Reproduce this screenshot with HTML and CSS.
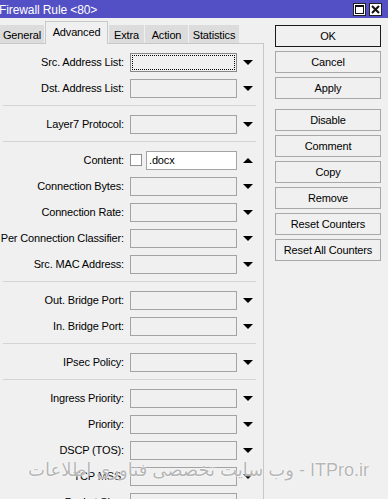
FILE: index.html
```html
<!DOCTYPE html>
<html>
<head>
<meta charset="utf-8">
<link rel="stylesheet" href="styles.css">
</head>
<body>
<div class="window">
  <div class="titlebar">
    <span class="title">Firewall Rule &lt;80&gt;</span>
    <div class="wbtns">
      <span class="wbtn"><svg width="11" height="11" viewBox="0 0 11 11"><rect x="1.5" y="1.5" width="8" height="8" fill="none" stroke="#111" stroke-width="1"/><rect x="1" y="1" width="9" height="2" fill="#111"/></svg></span>
      <span class="wbtn"><svg width="11" height="11" viewBox="0 0 11 11"><path d="M2 2 L9 9 M9 2 L2 9" stroke="#111" stroke-width="2" fill="none"/></svg></span>
    </div>
  </div>
  <div class="main">
    <div class="left">
      <div class="tabs">
        <div class="tab t-general">General</div>
        <div class="tab active t-adv">Advanced</div>
        <div class="tab t-extra">Extra</div>
        <div class="tab t-action">Action</div>
        <div class="tab t-stats">Statistics</div>
      </div>
      <div class="panel">
        <div class="row"><span class="label">Src. Address List:</span><span class="input focus"></span><span class="arrow down"></span></div>
        <div class="row"><span class="label">Dst. Address List:</span><span class="input"></span><span class="arrow down"></span></div>
        <div class="sep"></div>
        <div class="row"><span class="label">Layer7 Protocol:</span><span class="input"></span><span class="arrow down"></span></div>
        <div class="sep"></div>
        <div class="row"><span class="label">Content:</span><span class="check"></span><span class="input text">.docx</span><span class="arrow up"></span></div>
        <div class="row"><span class="label">Connection Bytes:</span><span class="input"></span><span class="arrow down"></span></div>
        <div class="row"><span class="label">Connection Rate:</span><span class="input"></span><span class="arrow down"></span></div>
        <div class="row"><span class="label">Per Connection Classifier:</span><span class="input"></span><span class="arrow down"></span></div>
        <div class="row"><span class="label">Src. MAC Address:</span><span class="input"></span><span class="arrow down"></span></div>
        <div class="sep"></div>
        <div class="row"><span class="label">Out. Bridge Port:</span><span class="input"></span><span class="arrow down"></span></div>
        <div class="row"><span class="label">In. Bridge Port:</span><span class="input"></span><span class="arrow down"></span></div>
        <div class="sep"></div>
        <div class="row"><span class="label">IPsec Policy:</span><span class="input"></span><span class="arrow down"></span></div>
        <div class="sep"></div>
        <div class="row"><span class="label">Ingress Priority:</span><span class="input"></span><span class="arrow down"></span></div>
        <div class="row"><span class="label">Priority:</span><span class="input"></span><span class="arrow down"></span></div>
        <div class="row"><span class="label">DSCP (TOS):</span><span class="input"></span><span class="arrow down"></span></div>
        <div class="row"><span class="label">TCP MSS:</span><span class="input"></span><span class="arrow down"></span></div>
        <div class="row"><span class="label">Packet Size:</span><span class="input"></span><span class="arrow down"></span></div>
      </div>
    </div>
    <div class="buttons">
      <div class="btn default">OK</div>
      <div class="btn">Cancel</div>
      <div class="btn">Apply</div>
      <div class="btn gap">Disable</div>
      <div class="btn">Comment</div>
      <div class="btn">Copy</div>
      <div class="btn">Remove</div>
      <div class="btn">Reset Counters</div>
      <div class="btn">Reset All Counters</div>
    </div>
  </div>
  <div class="watermark" dir="rtl">ITPro.ir - وب سایت تخصصی فناوری اطلاعات</div>
</div>
</body>
</html>
```
FILE: styles.css
```css
html, body {
  margin: 0;
  padding: 0;
}
body {
  width: 388px;
  height: 499px;
  overflow: hidden;
  background: #f0f0f0;
  font-family: "Liberation Sans", Arial, sans-serif;
  font-size: 11px;
  letter-spacing: -0.15px;
  color: #000;
}
.window {
  position: relative;
  width: 388px;
  height: 499px;
  overflow: hidden;
}
.titlebar {
  height: 18px;
  background: #5250c4;
  display: flex;
  align-items: center;
  justify-content: space-between;
  color: #fff;
}
.title {
  margin-left: -1px;
  margin-top: 2px;
  font-size: 12px;
  letter-spacing: -0.1px;
}
.wbtns {
  display: flex;
  gap: 3px;
  margin-right: 6px;
  margin-top: 1px;
}
.wbtn {
  width: 13px;
  height: 13px;
  box-sizing: border-box;
  border: 1px solid #222;
  background: #fff;
  display: flex;
  align-items: center;
  justify-content: center;
}
.main {
  display: flex;
}
.left {
  width: 264px;
  flex: none;
}
.tabs {
  height: 25px;
  display: flex;
  align-items: flex-end;
  gap: 1px;
  position: relative;
  z-index: 1;
}
.tab {
  height: 18px;
  box-sizing: border-box;
  background: #dcdcdc;
  display: flex;
  align-items: center;
  justify-content: center;
  padding-top: 1px;
}
.t-general { width: 44px; }
.t-adv { width: 63px; }
.t-extra { width: 35px; }
.t-action { width: 43px; }
.t-stats { width: 50px; }
.tab.active {
  height: 23px;
  margin-bottom: -1px;
  background: #f0f0f0;
  border: 1px solid #c8c8c8;
  border-bottom: none;
  padding-bottom: 4px;
}
.panel {
  border-top: 1px solid #c8c8c8;
  border-right: 1px solid #c8c8c8;
  padding-top: 5px;
  height: 460px;
}
.row {
  height: 26px;
  display: flex;
  align-items: center;
}
.label {
  width: 124px;
  flex: none;
  text-align: right;
  margin-right: 6px;
  white-space: nowrap;
}
.input {
  width: 107px;
  height: 19px;
  box-sizing: border-box;
  border: 1px solid #a3a3a3;
  background: #f0f0f0;
  flex: none;
}
.input.focus {
  border-color: #8a8a8a;
  outline: 1px dotted #000;
  outline-offset: -3px;
}
.check {
  width: 12px;
  height: 12px;
  box-sizing: border-box;
  border: 1px solid #8f8f8f;
  background: #fff;
  margin-right: 4px;
  flex: none;
}
.input.text {
  width: 91px;
  background: #fff;
  padding-left: 2px;
  line-height: 17px;
}
.arrow {
  width: 0;
  height: 0;
  margin-left: 6px;
  border-left: 5px solid transparent;
  border-right: 5px solid transparent;
}
.arrow.down {
  border-top: 5px solid #000;
}
.arrow.up {
  border-bottom: 5px solid #000;
}
.sep {
  height: 1px;
  background: #d4d4d4;
  margin: 4px 7px 5px 3px;
}
.buttons {
  width: 106px;
  margin-left: 11px;
  padding-top: 7px;
  display: flex;
  flex-direction: column;
  gap: 4px;
}
.btn {
  height: 22px;
  box-sizing: border-box;
  border: 1px solid #a8a8a8;
  background: #f0f0f0;
  display: flex;
  align-items: center;
  justify-content: center;
}
.btn.default {
  border-color: #1a1a1a;
}
.btn.gap {
  margin-top: 6px;
}
.watermark {
  position: absolute;
  right: 19px;
  top: 459px;
  font-family: "Liberation Sans", "DejaVu Sans", sans-serif;
  font-size: 18px;
  letter-spacing: 0;
  color: rgba(150, 150, 150, 0.7);
  text-shadow: 0 0 1px #fff, 0 0 2px #fff;
  white-space: nowrap;
}
```
